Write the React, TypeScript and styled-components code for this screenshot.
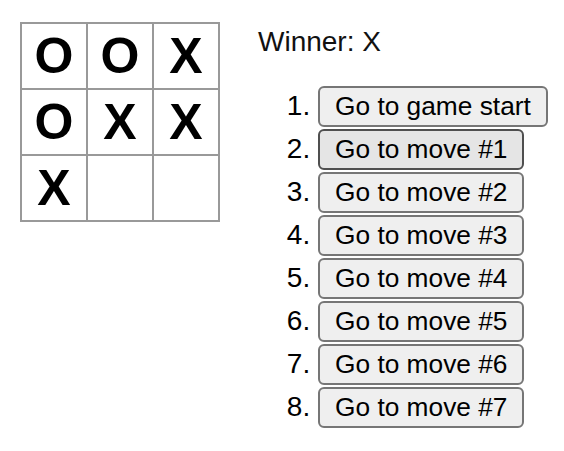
import styled, { createGlobalStyle } from "styled-components";

const GlobalStyle = createGlobalStyle`
    body {
        margin: 0;
        background: #fff;
        font-family: "Liberation Sans", Arial, sans-serif;
        color: #000;
    }
`;

const Game = styled.div`
    display: flex;
    flex-direction: row;
    align-items: flex-start;
    padding: 22px 20px;
`;
const Board = styled.div`
    display: grid;
    grid-template-columns: repeat(3, 66px);
    grid-auto-rows: 66px;
    width: 200px;
    height: 200px;
    flex-shrink: 0;
`;
const Square = styled.button`
    width: 68px;
    height: 68px;
    box-sizing: border-box;
    margin: 0;
    padding: 0;
    background: #fff;
    border: 2px solid #999;
    font-family: "Liberation Sans", Arial, sans-serif;
    font-size: 50px;
    font-weight: 700;
    line-height: 64px;
    text-align: center;
    color: #000;
`;
const GameInfo = styled.div`
    margin-left: 38px;
    flex-shrink: 0;
`;
const Status = styled.div`
    margin-top: 4px;
    font-size: 28px;
    line-height: 31px;
    color: #111;
`;
const Moves = styled.ol`
    margin: 29px 0 0;
    padding-left: 60px;
    font-size: 28px;
`;
const Move = styled.li`
    height: 43px;
`;
const JumpButton = styled.button<{ $hover?: boolean }>`
    height: 41px;
    box-sizing: border-box;
    padding: 4px 15px;
    margin: 0;
    white-space: nowrap;
    font-family: "Liberation Sans", Arial, sans-serif;
    font-size: 26.3px;
    line-height: 29px;
    color: #000;
    background: ${(p) => (p.$hover ? "#e5e5e5" : "#efefef")};
    border: 2px solid ${(p) => (p.$hover ? "#4f4f4f" : "#767676")};
    border-radius: 6px;
`;

const squares = ["O", "O", "X", "O", "X", "X", "X", "", ""];
const moves = ["Go to game start", ...Array.from({ length: 7 }, (_, i) => `Go to move #${i + 1}`)];

export default function App() {
    return (
        <>
            <GlobalStyle />
            <Game>
                <Board>
                    {squares.map((v, i) => (
                        <Square key={i}>{v}</Square>
                    ))}
                </Board>
                <GameInfo>
                    <Status>Winner: X</Status>
                    <Moves>
                        {moves.map((m, i) => (
                            <Move key={i}>
                                <JumpButton $hover={i === 1}>{m}</JumpButton>
                            </Move>
                        ))}
                    </Moves>
                </GameInfo>
            </Game>
        </>
    );
}
